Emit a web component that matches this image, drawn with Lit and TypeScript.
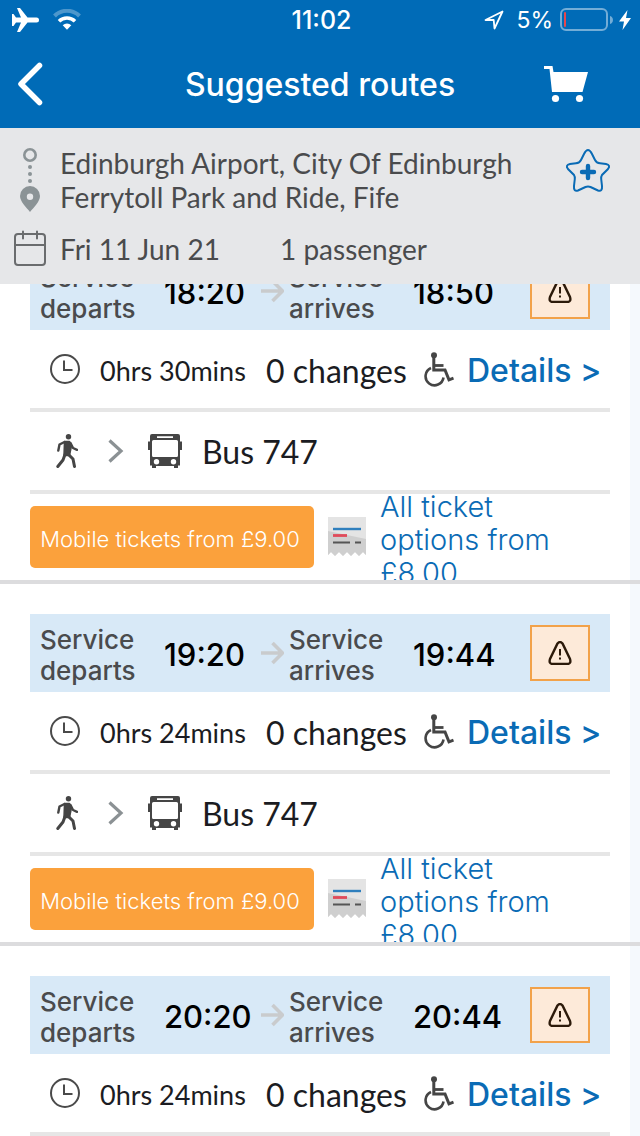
import { LitElement, html, css, svg } from 'lit';
import { customElement, property, state, query } from 'lit/decorators.js';

interface Route {
  departs: string;
  arrives: string;
  duration: string;
  changes: string;
  service: string;
  mobilePrice: string;
  ticketPrice: string;
}

const ROUTES: Route[] = [
  { departs: '18:20', arrives: '18:50', duration: '0hrs 30mins', changes: '0 changes', service: 'Bus 747', mobilePrice: '£9.00', ticketPrice: '£8.00' },
  { departs: '19:20', arrives: '19:44', duration: '0hrs 24mins', changes: '0 changes', service: 'Bus 747', mobilePrice: '£9.00', ticketPrice: '£8.00' },
  { departs: '20:20', arrives: '20:44', duration: '0hrs 24mins', changes: '0 changes', service: 'Bus 747', mobilePrice: '£9.00', ticketPrice: '£8.00' },
];

const reset = css`
  * {
    box-sizing: border-box;
  }
  button {
    appearance: none;
    border: 0;
    margin: 0;
    padding: 0;
    background: none;
    color: inherit;
    font: inherit;
    cursor: pointer;
  }
  a {
    color: inherit;
    text-decoration: none;
  }
  p,
  h1 {
    margin: 0;
  }
  svg {
    display: block;
    flex: none;
  }
`;

@customElement('status-bar')
class StatusBar extends LitElement {
  static styles = [
    reset,
    css`
      :host {
        display: grid;
        grid-template-columns: 1fr auto 1fr;
        align-items: center;
        height: 40px;
        padding: 0 9px 0 12px;
        color: #fff;
        font-family: Inter, sans-serif;
      }
      .left {
        display: flex;
        align-items: center;
        gap: 14px;
      }
      .clock {
        font-size: 25px;
        font-weight: 500;
      }
      .right {
        display: flex;
        align-items: center;
        justify-content: flex-end;
      }
      .percent {
        margin: 0 7px 0 12px;
        font-size: 23px;
      }
      .bolt {
        margin-left: 5px;
      }
    `,
  ];

  render() {
    return html`
      <div class="left">
        <svg width="27" height="26" viewBox="0 0 27 26" fill="#fff" aria-label="Airplane mode">
          <path d="M5 1h3l7.500 9.500h9a2.500 2.500 0 0 1 0 5h-9L8 25H5l4-9.500H4L1.500 19H0v-12h1.500L4 10.500h5z" />
        </svg>
        <svg width="28" height="22" viewBox="0 0 28 22" aria-label="Wi-Fi">
          <path d="M1.500 7a17.500 17.500 0 0 1 25 0" fill="none" stroke="#fff" stroke-opacity=".3" stroke-width="4" />
          <path d="M6 12.300a11.500 11.500 0 0 1 16 0" fill="none" stroke="#fff" stroke-width="3.600" />
          <path d="M9.700 16.200a6.200 6.200 0 0 1 8.600 0L14 20.800z" fill="#fff" />
        </svg>
      </div>
      <div class="clock">11:02</div>
      <div class="right">
        <svg width="20" height="20" viewBox="0 0 20 20" fill="none" stroke="#fff" stroke-width="1.800" stroke-linejoin="round" aria-label="Location">
          <path d="M18.500 1.500L1.500 10h8.200l.8 8.500z" />
        </svg>
        <span class="percent">5%</span>
        <svg width="54" height="24" viewBox="0 0 54 24" aria-label="Battery">
          <rect x="1" y="1" width="46" height="21" rx="5" fill="none" stroke="#fff" stroke-opacity=".45" stroke-width="2" />
          <path d="M50 8a4.200 4.200 0 0 1 0 8z" fill="#fff" fill-opacity=".45" />
          <rect x="4" y="4" width="2" height="15" rx="1" fill="#e8474c" />
        </svg>
        <svg class="bolt" width="12" height="20" viewBox="0 0 12 20" fill="#fff" aria-label="Charging">
          <path d="M8.500 0L0 11.500h5L3.500 20 12 8H7z" />
        </svg>
      </div>
    `;
  }
}

@customElement('title-bar')
class TitleBar extends LitElement {
  static styles = [
    reset,
    css`
      :host {
        display: grid;
        grid-template-columns: 88px 1fr 88px;
        align-items: center;
        height: 88px;
        color: #fff;
        font-family: Inter, sans-serif;
      }
      .back {
        justify-self: start;
        padding: 12px 16px;
      }
      .title {
        padding-top: 2px;
        font-size: 32px;
        font-weight: 500;
        line-height: 36px;
        text-align: center;
      }
      .cart {
        justify-self: end;
        padding: 12px 52px 12px 0;
      }
    `,
  ];

  render() {
    return html`
      <button class="back" aria-label="Back">
        <svg width="28" height="44" viewBox="0 0 28 44" fill="none" stroke="#fff" stroke-width="5.500" stroke-linecap="round" stroke-linejoin="round">
          <path d="M23.500 3.500L5 22l18.500 18.500" />
        </svg>
      </button>
      <h1 class="title">Suggested routes</h1>
      <a class="cart" href="#basket" aria-label="Basket">
        <svg width="44" height="38" viewBox="0 0 44 38" fill="#fff">
          <path d="M0 1h8.500l1 6H44l-5.500 20H8L5.500 4H0z" />
          <circle cx="11.500" cy="33.500" r="3.600" />
          <circle cx="35.500" cy="33.500" r="3.600" />
        </svg>
      </a>
    `;
  }
}

@customElement('journey-summary')
class JourneySummary extends LitElement {
  @property() from = '';
  @property() to = '';
  @property() date = '';
  @property() passengers = '';

  static styles = [
    reset,
    css`
      :host {
        display: block;
        padding: 18px 28px 16px 12px;
        background: #e6e7e9;
        color: #4a4b4d;
        font-family: Lato, sans-serif;
        font-size: 28px;
        line-height: 34px;
      }
      .places,
      .when {
        display: grid;
        grid-template-columns: 36px 1fr 48px;
        column-gap: 12px;
      }
      .pins,
      .star {
        align-self: end;
        justify-self: center;
      }
      .star {
        padding-bottom: 20px;
      }
      .when {
        grid-template-columns: 36px 208px 1fr;
        align-items: center;
        margin-top: 16px;
        height: 38px;
      }
    `,
  ];

  render() {
    return html`
      <div class="places">
        <svg class="pins" width="20" height="66" viewBox="0 0 20 66" aria-hidden="true">
          <circle cx="10" cy="7" r="5.700" fill="none" stroke="#8b9396" stroke-width="2.600" />
          <g fill="#8b9396">
            <circle cx="10" cy="19" r="2" />
            <circle cx="10" cy="26" r="2" />
            <circle cx="10" cy="33" r="2" />
            <path fill-rule="evenodd" d="M10 38a10 10 0 0 1 10 10c0 5.500-6 11-10 16C6 59 0 53.500 0 48a10 10 0 0 1 10-10zm0 7.500a3.200 3.200 0 1 0 0 6.400 3.200 3.200 0 0 0 0-6.400z" />
          </g>
        </svg>
        <div>
          <p>${this.from}</p>
          <p>${this.to}</p>
        </div>
        <button class="star" aria-label="Add to favourites">
          <svg width="48" height="46" viewBox="0 0 48 46" fill="none" stroke="#0a6bb5">
            <path d="M24 2c2 0 3 2 4 4l3 6q1.500 3 5 3.300l6 .7q5 1 2 5l-6 6q-1 1.500-.8 4l.8 7q.5 6-4 4.500L26.500 39q-2.500-1-5 0L14 42.500q-4.500 1.500-4-4.500l.8-7q.2-2.500-.8-4L4 21q-3-4 2-5l6-.7q3.500-.3 5-3.300l3-6c1-2 2-4 4-4z" stroke-width="2" />
            <path d="M24 18v12M18 24h12" stroke-width="4.400" stroke-linecap="round" />
          </svg>
        </button>
      </div>
      <div class="when">
        <svg width="36" height="38" viewBox="0 0 36 38" fill="none" stroke="#6a6c6e" stroke-width="2" stroke-linecap="round" aria-hidden="true">
          <rect x="3" y="4" width="30" height="31" rx="3" />
          <path d="M3 15h30M11 1.500v7M25 1.500v7" />
        </svg>
        <span>${this.date}</span>
        <span>${this.passengers}</span>
      </div>
    `;
  }
}

const clockIcon = svg`
  <svg width="30" height="30" viewBox="0 0 30 30" fill="none" stroke="#4a4a4a" stroke-width="2" aria-hidden="true">
    <circle cx="15" cy="15" r="14" /><path d="M14 6.500V16h8.500" />
  </svg>`;

const wheelchairIcon = svg`
  <svg width="30" height="36" viewBox="0 0 30 36" fill="none" stroke="#454545" aria-label="Wheelchair accessible">
    <circle cx="10" cy="4.200" r="3" fill="#454545" stroke="none" />
    <path d="M9.800 4v15h11.200l4 9.800 4.500-1.600" stroke-width="3" />
    <path d="M10 14.500h9.500" stroke-width="2.800" />
    <path d="M7 17a9 9 0 1 0 12.500 9.500" stroke-width="2.600" />
  </svg>`;

const walkIcon = svg`
  <svg width="22" height="34" viewBox="0 0 22 34" fill="none" stroke="#454545" stroke-linecap="round" stroke-linejoin="round" aria-label="Walk">
    <circle cx="12.500" cy="2.700" r="2.700" fill="#454545" stroke="none" />
    <path d="M8.500 7.500h5l2 4-2 10H8z" fill="#454545" stroke-width="1.500" />
    <path d="M8.500 8L3.500 10.500 2.300 16.500M14.500 9l2.500 5 4 1.800" stroke-width="2.400" />
    <path d="M9 20.500L7 26l-5.200 6.500M12.500 20.500l4.500 4.500 1.500 7.500" stroke-width="3" />
  </svg>`;

const chevronIcon = svg`
  <svg width="16" height="24" viewBox="0 0 16 24" fill="none" stroke="#8b9194" stroke-width="3.200" aria-hidden="true">
    <path d="M1.500 1.500L13 12 1.500 22.500" />
  </svg>`;

const busIcon = svg`
  <svg width="34" height="34" viewBox="0 0 34 34" fill="#454545" aria-hidden="true">
    <path fill-rule="evenodd" d="M4 0h26q2 0 2 2v5.500h2V16h-2v15.500h-2V34h-4v-2H8v2H4v-2.500H2V16H0V7.500h2V2q0-2 2-2zm5 2.200v1.800h16V2.200zM5.500 6Q4 6 4 7.500v14Q4 23 5.500 23h23q1.500 0 1.500-1.500v-14Q30 6 28.500 6zM8.500 25a2.700 2.700 0 1 0 0 5.400 2.700 2.700 0 0 0 0-5.400zm17 0a2.700 2.700 0 1 0 0 5.400 2.700 2.700 0 0 0 0-5.400z" />
  </svg>`;

const arrowIcon = svg`
  <svg width="24" height="24" viewBox="0 0 24 24" fill="none" stroke="#c9cbcd" stroke-width="3.600" aria-hidden="true">
    <path d="M1 12h21M12.500 2L22.500 12l-10 10" />
  </svg>`;

const warningIcon = svg`
  <svg width="24" height="24" viewBox="0 0 24 24" fill="none" stroke="#2c1a0a" aria-hidden="true">
    <path d="M9.500 2.500Q12-.5 14.500 2.500l7.500 15.500q1.500 5-3 5H5q-4.500 0-3-5z" stroke-width="2.400" />
    <path d="M12 8v6.500M12 16.500v2" stroke-width="2" />
  </svg>`;

const ticketIcon = svg`
  <svg width="38" height="40" viewBox="0 0 38 40" aria-hidden="true">
    <path d="M0 0h38v38l-3-3-4 4-4-4-4 4-4-4-4 4-4-4-4 4-4-4-3 3z" fill="#e4e4e4" />
    <path d="M0 14l38 8v16l-3-3-4 4-4-4-4 4-4-4-4 4-4-4-4 4-4-4-3 3z" fill="#cfcfcf" />
    <path d="M5 12h28" stroke="#2f7fbd" stroke-width="2.400" />
    <path d="M5 18.500h14" stroke="#e04a5a" stroke-width="2.800" />
    <path d="M5 25.500h17M27 25.500h6" stroke="#555" stroke-width="2" />
  </svg>`;

@customElement('route-card')
class RouteCard extends LitElement {
  @property({ attribute: false }) route!: Route;

  static styles = [
    reset,
    css`
      :host {
        display: block;
        padding-right: 10px;
        border-bottom: 4px solid #dcdcde;
        background: #f5f9fd;
        font-family: Inter, sans-serif;
      }
      .body {
        padding: 30px 20px 0 30px;
        background: #fff;
      }
      .times {
        display: grid;
        grid-template-columns: 124px 96px 29px 124px 1fr 60px;
        align-items: center;
        height: 78px;
        padding: 0 20px 0 10px;
        background: #d8e9f7;
      }
      .label,
      .time {
        padding-top: 4px;
      }
      .label {
        color: #4a4b4d;
        font-size: 26px;
        font-weight: 500;
        line-height: 31px;
      }
      .time {
        color: #000;
        font-size: 31px;
        font-weight: 500;
        line-height: 36px;
      }
      .warning {
        display: grid;
        place-items: center;
        height: 56px;
        border: 2px solid #f2a24a;
        background: #fdead9;
      }
      .info {
        display: grid;
        grid-template-columns: 50px 166px 158px 43px 1fr;
        align-items: center;
        height: 82px;
        padding-left: 20px;
        border-bottom: 4px solid #e6e6e6;
        color: #1b1c22;
        font-family: Lato, sans-serif;
      }
      .duration,
      .changes,
      .details {
        padding-top: 4px;
      }
      .duration {
        font-size: 27px;
        line-height: 34px;
      }
      .changes {
        font-size: 32px;
        line-height: 40px;
      }
      .details {
        justify-self: start;
        color: #0a6bb5;
        font-family: Inter, sans-serif;
        font-size: 32px;
        font-weight: 500;
        line-height: 40px;
        white-space: nowrap;
      }
      .legs {
        display: flex;
        align-items: center;
        height: 82px;
        padding-left: 26px;
        border-bottom: 4px solid #e6e6e6;
        color: #1b1c22;
        font-family: Lato, sans-serif;
        font-size: 32px;
        line-height: 40px;
      }
      .legs > :nth-child(2) {
        margin: 0 24px 0 30px;
      }
      .service {
        padding-top: 2px;
        margin-left: 20px;
      }
      .tickets {
        display: grid;
        grid-template-columns: 284px 38px 1fr;
        grid-template-rows: 86px;
        column-gap: 14px;
        align-items: center;
        height: 86px;
        overflow: hidden;
      }
      .mobile {
        height: 62px;
        padding: 4px 6px 0 2px;
        border-radius: 5px;
        background: #fba13c;
        color: #fff;
        font-size: 22px;
        font-weight: 300;
        white-space: nowrap;
      }
      .options {
        width: 190px;
        padding-top: 4px;
        color: #0a6bb5;
        font-size: 29px;
        font-weight: 300;
        line-height: 33px;
      }
    `,
  ];

  render() {
    const r = this.route;
    return html`
      <article class="body">
        <div class="times">
          <span class="label">Service departs</span>
          <time class="time">${r.departs}</time>
          ${arrowIcon}
          <span class="label">Service arrives</span>
          <time class="time">${r.arrives}</time>
          <button class="warning" aria-label="Service warning">${warningIcon}</button>
        </div>
        <div class="info">
          ${clockIcon}
          <span class="duration">${r.duration}</span>
          <span class="changes">${r.changes}</span>
          ${wheelchairIcon}
          <a class="details" href="#details">Details &gt;</a>
        </div>
        <div class="legs">
          ${walkIcon} ${chevronIcon} ${busIcon}
          <span class="service">${r.service}</span>
        </div>
        <div class="tickets">
          <button class="mobile">Mobile tickets from ${r.mobilePrice}</button>
          ${ticketIcon}
          <a class="options" href="#tickets">All ticket options from ${r.ticketPrice}</a>
        </div>
      </article>
    `;
  }
}

@customElement('app-root')
class AppRoot extends LitElement {
  @state() private routes = ROUTES;
  @query('.list') private list!: HTMLElement;

  static styles = [
    reset,
    css`
      :host {
        display: flex;
        flex-direction: column;
        height: 100vh;
        overflow: hidden;
        background: #fff;
      }
      .top {
        flex: none;
        background: #006bb7;
      }
      .summary {
        flex: none;
      }
      .list {
        flex: 1;
        min-height: 0;
        overflow-y: auto;
        scrollbar-width: none;
      }
    `,
  ];

  async firstUpdated() {
    const cards = Array.from(this.list.querySelectorAll('route-card')) as LitElement[];
    await Promise.all(cards.map((card) => card.updateComplete));
    this.list.scrollTop = 62;
  }

  render() {
    return html`
      <header class="top">
        <status-bar></status-bar>
        <title-bar></title-bar>
      </header>
      <journey-summary
        class="summary"
        from="Edinburgh Airport, City Of Edinburgh"
        to="Ferrytoll Park and Ride, Fife"
        date="Fri 11 Jun 21"
        passengers="1 passenger"
      ></journey-summary>
      <main class="list">
        ${this.routes.map((route) => html`<route-card .route=${route}></route-card>`)}
      </main>
    `;
  }
}
